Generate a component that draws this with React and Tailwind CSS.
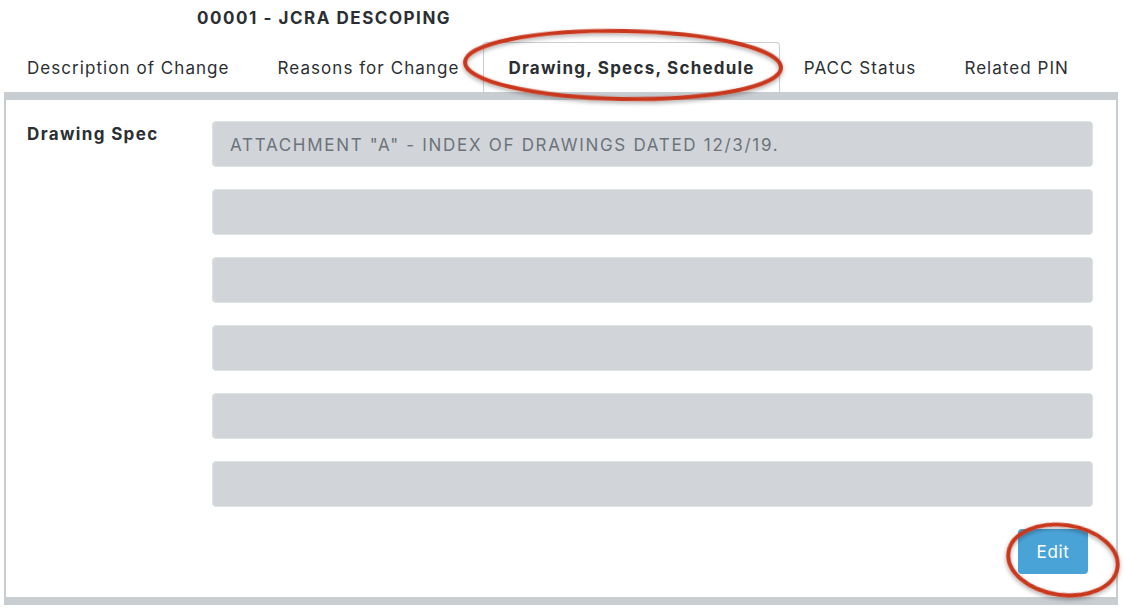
import React from "react";

const tabs = [
  { label: "Description of Change" },
  { label: "Reasons for Change" },
  { label: "Drawing, Specs, Schedule", active: true },
  { label: "PACC Status" },
  { label: "Related PIN" },
];

const specs = [
  'ATTACHMENT "A" - INDEX OF DRAWINGS DATED 12/3/19.',
  "",
  "",
  "",
  "",
  "",
];

const App = () => {
  return (
    <div
      className="relative h-[610px] w-[1124px] overflow-hidden bg-white text-[#2b2f33]"
      style={{ fontFamily: "Inter, 'Noto Sans', sans-serif" }}
    >
      <div className="flex h-[36px] items-center pl-[197px] pt-[1px]">
        <h1 className="text-[17px] font-bold tracking-[0.09em]">00001 - JCRA DESCOPING</h1>
      </div>

      <div className="flex h-[56px] items-end pl-[3px]">
        {tabs.map((tab) => (
          <div
            key={tab.label}
            className={
              tab.active
                ? "flex h-[50px] items-center rounded-t-[4px] border border-b-0 border-[#c8cdd1] px-6 pt-[3px] text-[17px] font-bold tracking-[0.072em]"
                : "flex h-[50px] items-center px-6 pt-[3px] text-[17px] tracking-[0.062em]"
            }
          >
            {tab.label}
          </div>
        ))}
      </div>

      <div className="ml-[4px] w-[1114px] border-x-2 border-t-8 border-b-8 border-[#c8cdd1] bg-white">
        <div className="flex pl-[21px] pr-[23px] pt-[21px] pb-[23px]">
          <div className="w-[185px] shrink-0 pt-[1px] text-[17px] font-bold tracking-[0.08em]">Drawing Spec</div>
          <div className="flex flex-1 flex-col gap-[22px]">
            {specs.map((text, i) => (
              <div
                key={i}
                className="flex h-[46px] items-center rounded-[4px] border border-[#dfe2e5] bg-[#d1d5d9] px-[17px] pt-[4px] text-[17px] tracking-[0.1em] text-[#6c737a]"
              >
                {text}
              </div>
            ))}
            <div className="flex justify-end pr-[5px]">
              <button className="h-[45px] w-[70px] rounded-[4px] bg-[#4aa3d7] pt-[2px] text-[17px] tracking-[0.04em] text-white">
                Edit
              </button>
            </div>
          </div>
        </div>
      </div>

      <svg className="pointer-events-none absolute inset-0" width="1124" height="610">
        <defs>
          <filter id="sh" x="-10%" y="-20%" width="120%" height="140%">
            <feDropShadow dx="0" dy="2" stdDeviation="2" floodColor="#000" floodOpacity="0.35" />
          </filter>
        </defs>
        <ellipse
          cx="623"
          cy="65"
          rx="158"
          ry="34"
          transform="rotate(1 623 65)"
          fill="none"
          stroke="#c9371f"
          strokeWidth="4"
          filter="url(#sh)"
        />
        <ellipse
          cx="1063"
          cy="560"
          rx="55"
          ry="35"
          transform="rotate(8 1063 560)"
          fill="none"
          stroke="#c9371f"
          strokeWidth="4"
          filter="url(#sh)"
        />
      </svg>
    </div>
  );
};

export default App;
